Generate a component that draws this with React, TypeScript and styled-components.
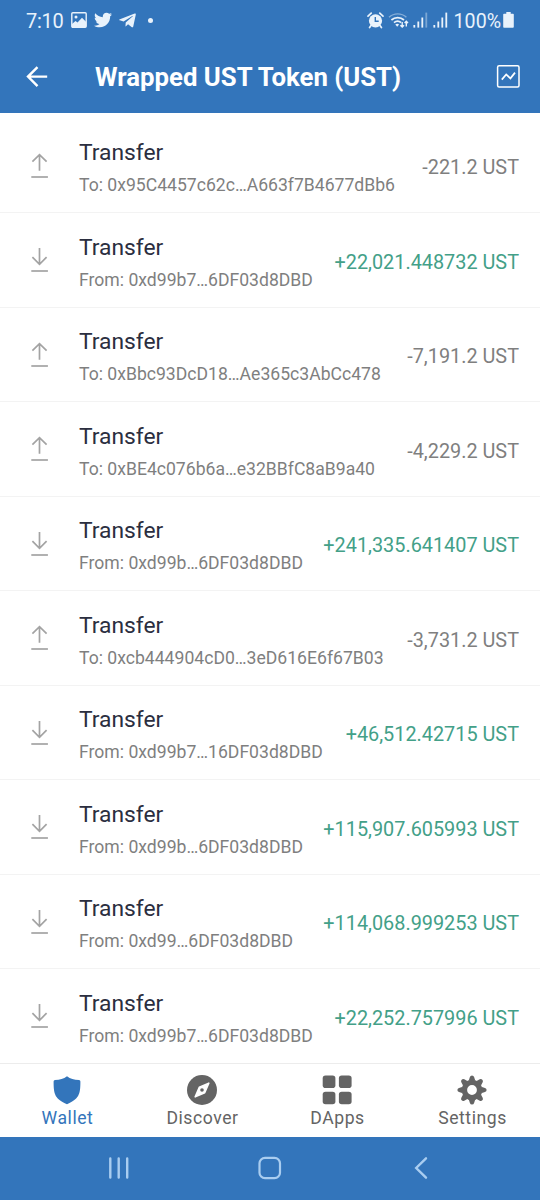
import styled, { createGlobalStyle } from "styled-components";
import { FaTelegramPlane, FaTwitter } from "react-icons/fa";

const GlobalStyle = createGlobalStyle`
  * {
    box-sizing: border-box;
  }
  body {
    margin: 0;
    background: #fff;
    font-family: Roboto, sans-serif;
  }
  svg {
    display: block;
    flex: none;
  }
`;

const Screen = styled.div`
  width: 540px;
  height: 1200px;
  display: flex;
  flex-direction: column;
  overflow: hidden;
`;

const StatusBar = styled.div`
  height: 40px;
  padding: 0 26px 0 26px;
  display: flex;
  align-items: center;
  justify-content: space-between;
  background: #3375bb;
  color: #e9f2fb;
`;

const StatusGroup = styled.div`
  display: flex;
  align-items: center;
`;

const Clock = styled.span`
  width: 45px;
  padding-top: 2px;
  font-size: 20px;
  letter-spacing: -0.3px;
`;

const Battery = styled.span`
  padding-top: 2px;
  font-size: 19.6px;
  margin: 0 2px 0 6px;
`;

const Header = styled.header`
  height: 73px;
  padding: 0 20px 0 26px;
  display: flex;
  align-items: center;
  background: #3375bb;
  color: #fff;
`;

const Title = styled.h1`
  flex: 1;
  margin: 1px 0 0 47px;
  font-size: 25.75px;
  font-weight: 700;
  line-height: 30px;
  white-space: nowrap;
`;

const List = styled.main`
  height: 950px;
  padding-top: 5.5px;
`;

const Row = styled.div`
  height: 94.5px;
  padding: 3px 21px 0 28px;
  display: flex;
  align-items: center;
  border-bottom: 1px solid #f3f3f3;

  &:last-child {
    border-bottom-color: transparent;
  }
`;

const Details = styled.div`
  flex: 1;
  padding-top: 4.5px;
  margin-left: 27px;
  white-space: nowrap;
`;

const Kind = styled.div`
  font-size: 22.8px;
  line-height: 32px;
  color: #2b2e3f;
`;

const Address = styled.div`
  font-size: 17.6px;
  line-height: 32px;
  color: #7f7f7f;
`;

const Amount = styled.div<{ $incoming: boolean }>`
  padding-top: 2px;
  font-size: 19.85px;
  white-space: nowrap;
  color: ${({ $incoming }) => ($incoming ? "#43a088" : "#7f7f7f")};
`;

const TabBar = styled.nav`
  height: 74px;
  display: grid;
  grid-template-columns: repeat(4, 1fr);
  border-top: 1px solid #ececec;
  background: #fff;
`;

const Tab = styled.div<{ $active?: boolean }>`
  padding-top: 10.5px;
  display: flex;
  flex-direction: column;
  align-items: center;
  gap: 1px;
  font-size: 17.6px;
  line-height: 24px;
  letter-spacing: 0.55px;
  color: ${({ $active }) => ($active ? "#3375bb" : "#646464")};

  svg {
    margin-right: 1px;
  }
`;

const SystemBar = styled.div`
  height: 63px;
  padding: 0 0 1px 100px;
  display: flex;
  align-items: center;
  gap: 114px;
  background: #3375bb;
  color: #a9cdf0;
`;

const transfers = [
  { to: "0x95C4457c62c…A663f7B4677dBb6", amount: "-221.2" },
  { from: "0xd99b7…6DF03d8DBD", amount: "+22,021.448732" },
  { to: "0xBbc93DcD18…Ae365c3AbCc478", amount: "-7,191.2" },
  { to: "0xBE4c076b6a…e32BBfC8aB9a40", amount: "-4,229.2" },
  { from: "0xd99b…6DF03d8DBD", amount: "+241,335.641407" },
  { to: "0xcb444904cD0…3eD616E6f67B03", amount: "-3,731.2" },
  { from: "0xd99b7…16DF03d8DBD", amount: "+46,512.42715" },
  { from: "0xd99b…6DF03d8DBD", amount: "+115,907.605993" },
  { from: "0xd99…6DF03d8DBD", amount: "+114,068.999253" },
  { from: "0xd99b7…6DF03d8DBD", amount: "+22,252.757996" },
];

const PictureIcon = () => (
  <svg width="16" height="16" viewBox="0 0 16 16">
    <rect x="0.8" y="0.8" width="14.4" height="14.4" rx="1" fill="none" stroke="currentColor" strokeWidth="1.4" />
    <circle cx="5" cy="5" r="1.5" fill="currentColor" />
    <path d="M1 12l3.5-3 2 1.6L11 5.8l4 4V15H1z" fill="currentColor" />
  </svg>
);

const AlarmIcon = () => (
  <svg width="17" height="17" viewBox="0 0 17 17" fill="none" stroke="currentColor">
    <circle cx="8.5" cy="8.8" r="6.6" fill="currentColor" stroke="none" />
    <path d="M1 4.2L4.2 1.2M16 4.2L12.8 1.2M4 13.6l-1.4 2M13 13.6l1.4 2" strokeWidth="1.7" strokeLinecap="round" />
    <path d="M8.3 5v4.2h3.4" stroke="#3375bb" strokeWidth="1.4" />
  </svg>
);

const WifiIcon = () => (
  <svg width="21" height="17" viewBox="0 0 21 17" fill="none" stroke="currentColor">
    <path d="M1 5.2a13 13 0 0 1 17.4 0" strokeWidth="1.4" opacity="0.45" />
    <path d="M3.4 8a9.4 9.4 0 0 1 12.6 0" strokeWidth="1.7" />
    <path d="M6 10.7a5.6 5.6 0 0 1 7 -.2" strokeWidth="1.7" />
    <path d="M7.3 12.6a3 3 0 0 1 3.8 0L9.2 14.8z" fill="currentColor" stroke="none" />
    <path d="M14.2 10v5M12.4 13.2l1.8 1.9 1.8-1.9M18.3 14.4V9.2M16.6 11l1.7-1.8L20 11" strokeWidth="1.4" />
  </svg>
);

const SignalIcon = ({ weak }: { weak?: boolean }) => (
  <svg width="15" height="16" viewBox="0 0 15 16" fill="currentColor">
    <rect x="0.4" y="13" width="1.8" height="2.6" />
    <rect x="4.4" y="9.5" width="1.8" height="6.1" />
    <rect x="8.4" y="5.5" width="1.8" height="10.1" />
    <rect x="12.4" y="0.6" width="1.8" height="15" opacity={weak ? 0.4 : 1} />
  </svg>
);

const BatteryIcon = () => (
  <svg width="11" height="16" viewBox="0 0 11 16" fill="currentColor">
    <path d="M3.3 0h4.4v1.8H10q.8 0 .8.8v12.2q0 .9-.8.9H1q-.8 0-.8-.9V2.6q0-.8.8-.8h2.3z" />
  </svg>
);

const BackIcon = () => (
  <svg width="22" height="22" viewBox="0 0 22 22" fill="none" stroke="currentColor" strokeWidth="2.4">
    <path d="M21.2 10.6H2M11.5 1.1L2 10.6l9.5 9.5" />
  </svg>
);

const ChartIcon = () => (
  <svg width="24" height="24" viewBox="0 0 24 24" fill="none" stroke="currentColor">
    <rect x="1.6" y="0.8" width="21.4" height="21.2" rx="1.5" strokeWidth="1.5" />
    <path d="M5.8 14.6l4.4-5.2 4.2 4 4.6-5.8" strokeWidth="1.7" />
  </svg>
);

const TransferIcon = ({ incoming }: { incoming: boolean }) => (
  <svg width="24" height="28" viewBox="0 0 24 28" fill="none" stroke="#a3a3a3" strokeWidth="1.7">
    <path d={incoming ? "M11.5 1v16.2M4.4 10.2l7.1 7.1 7.1-7.1" : "M11.5 17.8V1.5M4.4 8.7l7.1-7.1 7.1 7.1"} />
    <path d="M3.3 24h16.6" />
  </svg>
);

const ShieldIcon = () => (
  <svg width="30" height="30" viewBox="0 0 30 30" fill="currentColor">
    <path d="M15 1.2C18.4 3.8 22 4.8 27 4.9q1.4.1 1.4 1.5C28.4 20 26.8 23.5 15 29.3 3.2 23.5 1.6 20 1.6 6.4Q1.6 5 3 4.9C8 4.8 11.6 3.8 15 1.2z" />
  </svg>
);

const CompassIcon = () => (
  <svg width="32" height="30" viewBox="0 0 32 30">
    <circle cx="16" cy="15" r="15" fill="currentColor" />
    <path
      d="M22.8 8.2L18.7 17.8 9.2 21.8l4.1-9.6z"
      fill="#fff"
      stroke="#fff"
      strokeWidth="1.6"
      strokeLinejoin="round"
    />
    <circle cx="16" cy="15" r="1.8" fill="currentColor" />
  </svg>
);

const GridIcon = () => (
  <svg width="30" height="30" viewBox="0 0 30 30" fill="currentColor">
    <rect x="0.7" y="0.6" width="12.7" height="12.5" rx="2.8" />
    <rect x="16.9" y="0.6" width="12.7" height="12.5" rx="2.8" />
    <rect x="0.7" y="16.8" width="12.7" height="12.5" rx="2.8" />
    <rect x="16.9" y="16.8" width="12.7" height="12.5" rx="2.8" />
  </svg>
);

const GearIcon = () => (
  <svg width="30" height="30" viewBox="-15 -15 30 30">
    <circle r="7.6" fill="none" stroke="currentColor" strokeWidth="5.4" />
    {[0, 45, 90, 135, 180, 225, 270, 315].map((angle) => (
      <path
        key={angle}
        d="M-3.3-9.2L-2.1-13Q-1.6-14.6 0-14.6T2.1-13L3.3-9.2z"
        fill="currentColor"
        transform={`rotate(${angle})`}
      />
    ))}
  </svg>
);

const RecentsIcon = () => (
  <svg width="38" height="24" viewBox="0 0 38 24" fill="none" stroke="currentColor" strokeWidth="2.4" strokeLinecap="round">
    <path d="M10.3 2.5v19M18.7 2.5v19M27.2 2.5v19" />
  </svg>
);

const HomeIcon = () => (
  <svg width="36" height="24" viewBox="0 0 36 24" fill="none" stroke="currentColor" strokeWidth="2.2">
    <rect x="7.5" y="1.8" width="20.5" height="20.4" rx="5.5" />
  </svg>
);

const ReturnIcon = () => (
  <svg width="36" height="24" viewBox="0 0 36 24" fill="none" stroke="currentColor" strokeWidth="2.4" strokeLinecap="round">
    <path d="M24 2.3L14.2 12l9.8 9.7" />
  </svg>
);

const Notifications = styled.div`
  display: flex;
  align-items: center;
  gap: 6.5px;
`;

const Dot = styled.span`
  width: 5px;
  height: 5px;
  margin-left: 4px;
  border-radius: 50%;
  background: currentColor;
`;

const Indicators = styled.div`
  display: flex;
  align-items: center;
  gap: 5px;

  svg + svg {
    margin-left: -1px;
  }
  svg:last-child {
    margin-left: 0;
  }
`;

function App() {
  return (
    <>
      <GlobalStyle />
      <Screen>
        <StatusBar>
          <StatusGroup>
            <Clock>7:10</Clock>
            <Notifications>
              <PictureIcon />
              <FaTwitter size={18} />
              <FaTelegramPlane size={19} />
              <Dot />
            </Notifications>
          </StatusGroup>
          <StatusGroup>
            <Indicators>
              <AlarmIcon />
              <WifiIcon />
              <SignalIcon weak />
              <SignalIcon />
            </Indicators>
            <Battery>100%</Battery>
            <BatteryIcon />
          </StatusGroup>
        </StatusBar>

        <Header>
          <BackIcon />
          <Title>Wrapped UST Token (UST)</Title>
          <ChartIcon />
        </Header>

        <List>
          {transfers.map(({ to, from, amount }, index) => (
            <Row key={index}>
              <TransferIcon incoming={!!from} />
              <Details>
                <Kind>Transfer</Kind>
                <Address>{to ? `To: ${to}` : `From: ${from}`}</Address>
              </Details>
              <Amount $incoming={!!from}>{amount} UST</Amount>
            </Row>
          ))}
        </List>

        <TabBar>
          <Tab $active>
            <ShieldIcon />
            Wallet
          </Tab>
          <Tab>
            <CompassIcon />
            Discover
          </Tab>
          <Tab>
            <GridIcon />
            DApps
          </Tab>
          <Tab>
            <GearIcon />
            Settings
          </Tab>
        </TabBar>

        <SystemBar>
          <RecentsIcon />
          <HomeIcon />
          <ReturnIcon />
        </SystemBar>
      </Screen>
    </>
  );
}

export default App;
